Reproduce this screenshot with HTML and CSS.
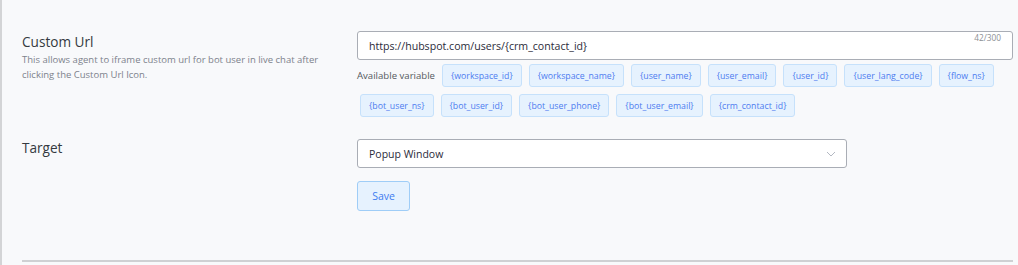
FILE: index.html
```html
<!DOCTYPE html>
<html>
<head>
<meta charset="utf-8">
<link rel="stylesheet" href="styles.css">
</head>
<body>
<div class="page">
  <div class="panel">
    <div class="row row-url">
      <div class="label-col">
        <div class="label">Custom Url</div>
        <div class="desc">This allows agent to iframe custom url for bot user in live chat after clicking the Custom Url Icon.</div>
      </div>
      <div class="field-col">
        <div class="input-box">
          <span class="input-text">https://hubspot.com/users/{crm_contact_id}</span>
          <span class="counter">42/300</span>
        </div>
        <div class="vars">
          <span class="vars-label">Available variable</span>
          <span class="chip">{workspace_id}</span>
          <span class="chip">{workspace_name}</span>
          <span class="chip">{user_name}</span>
          <span class="chip">{user_email}</span>
          <span class="chip">{user_id}</span>
          <span class="chip">{user_lang_code}</span>
          <span class="chip">{flow_ns}</span>
          <span class="chip">{bot_user_ns}</span>
          <span class="chip">{bot_user_id}</span>
          <span class="chip">{bot_user_phone}</span>
          <span class="chip">{bot_user_email}</span>
          <span class="chip">{crm_contact_id}</span>
        </div>
      </div>
    </div>
    <div class="row row-target">
      <div class="label-col">
        <div class="label label-target">Target</div>
      </div>
      <div class="field-col">
        <div class="select-box">
          <span class="select-text">Popup Window</span>
          <svg class="chev" width="10" height="6" viewBox="0 0 10 6"><path d="M1 1 L5 5 L9 1" fill="none" stroke="#b3b8c2" stroke-width="1"/></svg>
        </div>
        <button class="save">Save</button>
      </div>
    </div>
    <div class="divider"></div>
  </div>
</div>
</body>
</html>
```

FILE: styles.css
```css
* { box-sizing: border-box; }
html, body { margin: 0; padding: 0; }
body {
  background: #f8f9fb;
  font-family: "Open Sans", "Noto Sans", sans-serif;
  color: #333;
}
.page {
  height: 265px;
  border-left: 2px solid #d3d4d6;
  background: #f8f9fb;
}
.panel {
  padding: 31px 5px 0 20px;
}
.row {
  display: grid;
  grid-template-columns: 335px 1fr;
}
.label {
  font-size: 13.6px;
  line-height: 20px;
  color: #343a40;
  margin-top: 1px;
}
.desc {
  font-size: 9.5px;
  line-height: 15px;
  color: #7d828c;
  width: 320px;
}
.input-box {
  position: relative;
  height: 29px;
  border: 1px solid #a9adb5;
  border-radius: 3px;
  background: #fff;
  display: flex;
  align-items: center;
  padding-left: 11px;
}
.input-text {
  font-size: 10.6px;
  color: #2b2b3a;
}
.counter {
  position: absolute;
  top: 0px;
  right: 11px;
  font-size: 8.3px;
  color: #8c8f94;
}
.vars {
  display: flex;
  flex-wrap: wrap;
  gap: 7px 7px;
  margin-top: 4px;
  align-items: center;
}
.vars-label {
  font-size: 9.6px;
  color: #555a60;
}
.chip {
  height: 23px;
  display: inline-flex;
  align-items: center;
  padding: 0 8px;
  background: #e6f2fe;
  border: 1px solid #c6e1fb;
  border-radius: 3px;
  font-size: 8.75px;
  color: #4d7cf0;
}
.chip:nth-child(9) { margin-left: 3px; }
.row-target {
  margin-top: 22px;
}
.label-target {
  margin-top: -1px;
}
.select-box {
  width: 490px;
  height: 29px;
  border: 1px solid #a9adb5;
  border-radius: 3px;
  background: #fff;
  display: flex;
  align-items: center;
  justify-content: space-between;
  padding: 0 10px 0 11px;
}
.select-text {
  font-size: 10.5px;
  color: #2b2b3a;
}
.save {
  display: block;
  margin-top: 13px;
  width: 53px;
  height: 30px;
  background: #e6f2fe;
  border: 1px solid #9fcdf7;
  border-radius: 3px;
  font-family: "Open Sans", "Noto Sans", sans-serif;
  font-size: 10.5px;
  color: #3e7cf0;
  padding: 0;
}
.divider {
  margin-top: 49px;
  height: 2px;
  background: #cfd0d3;
}
```
